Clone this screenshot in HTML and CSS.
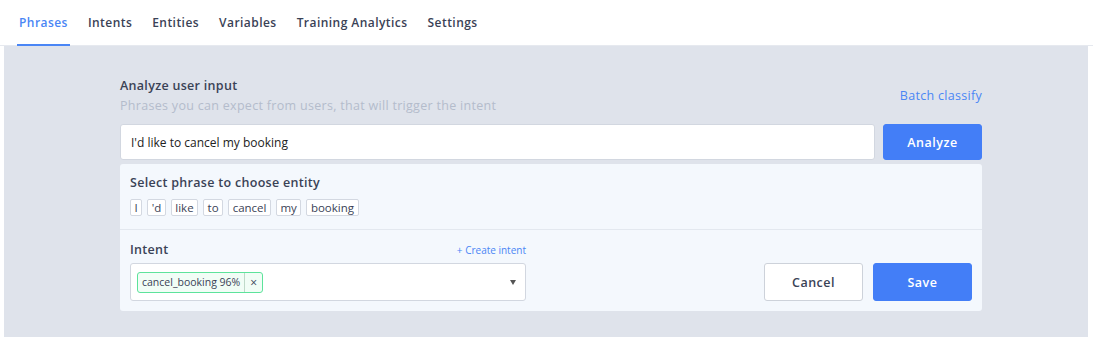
FILE: index.html
```html
<!DOCTYPE html>
<html lang="en">
<head>
  <meta charset="UTF-8">
  <title>Phrases</title>
  <link rel="stylesheet" href="styles.css">
</head>
<body>

<nav class="tabs">
  <a class="tab active">Phrases</a>
  <a class="tab">Intents</a>
  <a class="tab">Entities</a>
  <a class="tab">Variables</a>
  <a class="tab">Training Analytics</a>
  <a class="tab">Settings</a>
</nav>

<div class="stage">
  <div class="content">

    <div class="head">
      <div>
        <h3 class="title">Analyze user input</h3>
        <p class="subtitle">Phrases you can expect from users, that will trigger the intent</p>
      </div>
      <a class="link">Batch classify</a>
    </div>

    <div class="analyze-row">
      <input type="text" class="phrase-input" value="I'd like to cancel my booking">
      <button class="btn primary analyze">Analyze</button>
    </div>

    <div class="panel">
      <div class="tokens-block">
        <p class="label">Select phrase to choose entity</p>
        <div class="tokens">
          <span class="token">I</span>
          <span class="token">'d</span>
          <span class="token">like</span>
          <span class="token">to</span>
          <span class="token">cancel</span>
          <span class="token">my</span>
          <span class="token">booking</span>
        </div>
      </div>

      <div class="intent-block">
        <div class="intent-field">
          <div class="intent-head">
            <span class="label">Intent</span>
            <a class="small-link">+ Create intent</a>
          </div>
          <div class="select">
            <span class="tag">
              <span class="tag-text">cancel_booking 96%</span>
              <span class="tag-x">×</span>
            </span>
            <span class="caret"></span>
          </div>
        </div>
        <div class="actions">
          <button class="btn secondary">Cancel</button>
          <button class="btn primary">Save</button>
        </div>
      </div>
    </div>

  </div>
</div>

</body>
</html>
```

FILE: styles.css
```css
* {
  box-sizing: border-box;
}
body {
  margin: 0;
  font-family: "Open Sans", "Noto Sans", sans-serif;
  background: #fff;
  color: #3a4256;
}

/* tabs */
.tabs {
  display: flex;
  gap: 16px;
  height: 46px;
  padding-left: 17px;
  border-bottom: 1px solid #e6e9ef;
}
.tab {
  display: flex;
  align-items: center;
  padding: 0 2px;
  font-size: 12px;
  font-weight: 600;
  letter-spacing: 0.45px;
  color: #3a4256;
  border-bottom: 2px solid transparent;
  margin-bottom: -1px;
}
.tab.active {
  color: #4a86f5;
  border-bottom-color: #4a86f5;
}

/* gray area */
.stage {
  margin: 0 5px 0 4px;
  height: 291px;
  background: #dfe3eb;
  padding-top: 31px;
}
.content {
  width: 862px;
  margin-left: 116px;
}

.head {
  display: flex;
  justify-content: space-between;
  align-items: flex-end;
}
.title {
  margin: 0;
  font-size: 12.5px;
  font-weight: 600;
  letter-spacing: 0.3px;
  color: #3a4256;
  line-height: 18px;
}
.subtitle {
  margin: 2px 0 0;
  font-size: 12.5px;
  letter-spacing: 0.3px;
  color: #b4bccb;
  line-height: 18px;
}
.link {
  font-size: 12.5px;
  letter-spacing: 0.3px;
  color: #4a86f5;
  margin-bottom: 11px;
}

.analyze-row {
  display: flex;
  gap: 8px;
  margin-top: 9px;
}
.phrase-input {
  flex: 1;
  height: 36px;
  border: 1px solid #d2d7e0;
  border-radius: 3px;
  padding: 0 10px;
  font-family: inherit;
  font-size: 12px;
  color: #222;
  background: #fff;
}

.btn {
  height: 37px;
  border-radius: 3px;
  font-family: inherit;
  font-size: 12.5px;
  font-weight: 600;
  letter-spacing: 0.5px;
  cursor: pointer;
}
.btn.primary {
  background: #437ef7;
  border: 1px solid #437ef7;
  color: #fff;
  width: 99px;
}
.btn.secondary {
  background: #fff;
  border: 1px solid #cdd2da;
  color: #3a4256;
  width: 99px;
}
.analyze {
  height: 36px;
}

/* panel */
.panel {
  margin-top: 4px;
  background: #f4f8fd;
  border-radius: 3px;
}
.tokens-block {
  padding: 10px 10px 13px;
  border-bottom: 1px solid #e3e8ef;
}
.label {
  margin: 0;
  font-size: 12.5px;
  font-weight: 600;
  letter-spacing: 0.3px;
  color: #3a4256;
  line-height: 18px;
}
.tokens {
  display: flex;
  gap: 5px;
  margin-top: 7px;
}
.token {
  height: 17px;
  line-height: 15px;
  padding: 0 3.5px;
  font-size: 11.5px;
  color: #3a4256;
  background: #fff;
  border: 1px solid #d3d8e1;
  border-radius: 2px;
}

.intent-block {
  display: flex;
  justify-content: space-between;
  align-items: flex-end;
  padding: 11px 10px 10px;
}
.intent-field {
  width: 396px;
}
.intent-head {
  display: flex;
  justify-content: space-between;
  align-items: center;
  margin-bottom: 4px;
}
.small-link {
  font-size: 10px;
  color: #4a86f5;
}
.select {
  position: relative;
  height: 38px;
  background: #fff;
  border: 1px solid #d2d7e0;
  border-radius: 3px;
  display: flex;
  align-items: center;
  padding-left: 6px;
}
.tag {
  display: flex;
  height: 21px;
  border: 1px solid #5de39b;
  border-radius: 3px;
  background: #f1fdf6;
  font-size: 10.5px;
  color: #3a4256;
  line-height: 19px;
}
.tag-text {
  padding: 0 4px;
  border-right: 1px solid #bfd9c9;
}
.tag-x {
  padding: 0 5px;
  font-size: 12px;
}
.caret {
  position: absolute;
  right: 9px;
  top: 16px;
  border-left: 3.5px solid transparent;
  border-right: 3.5px solid transparent;
  border-top: 5px solid #555;
}
.actions {
  display: flex;
  gap: 10px;
}
.actions .btn {
  height: 38px;
}
```
